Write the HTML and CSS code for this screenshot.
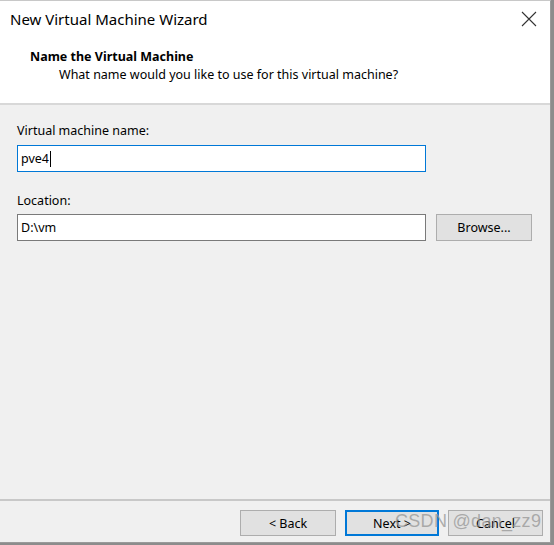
FILE: index.html
```html
<!DOCTYPE html>
<html>
<head>
<meta charset="utf-8">
<link rel="stylesheet" href="styles.css">
</head>
<body>
<div class="window">
  <div class="titlebar">
    <span class="title">New Virtual Machine Wizard</span>
    <svg class="close" width="16" height="16" viewBox="0 0 16 16"><path d="M1 1 L15 15 M15 1 L1 15" stroke="#333" stroke-width="1.1" fill="none"/></svg>
  </div>
  <div class="header">
    <div class="h-title">Name the Virtual Machine</div>
    <div class="h-sub">What name would you like to use for this virtual machine?</div>
  </div>
  <div class="content">
    <div class="label">Virtual machine name:</div>
    <div class="field focused"><span>pve4</span><span class="caret"></span></div>
    <div class="label loc">Location:</div>
    <div class="row">
      <div class="field"><span>D:\vm</span></div>
      <div class="btn browse">Browse...</div>
    </div>
  </div>
  <div class="footer">
    <div class="btn back">&lt; Back</div>
    <div class="btn default">Next &gt;</div>
    <div class="btn">Cancel</div>
    <div class="watermark">CSDN @dan_zz9</div>
  </div>
</div>
</body>
</html>
```
FILE: styles.css
```css
html, body {
  margin: 0;
  padding: 0;
}
body {
  width: 554px;
  height: 545px;
  background: #8c8c8c;
  font-family: "Noto Sans", "Open Sans", sans-serif;
  font-size: 12px;
  color: #000;
  overflow: hidden;
}
.window {
  width: 550px;
  height: 541px;
  border-right: 1px solid #9a9a9a;
  border-bottom: 1px solid #9a9a9a;
  border-top: 1px solid #c8c8c8;
  background: #f0f0f0;
  display: flex;
  flex-direction: column;
  position: relative;
}
.titlebar {
  background: #fff;
  height: 37px;
  display: flex;
  align-items: center;
  justify-content: space-between;
  padding: 0 13px 0 10px;
}
.title {
  font-size: 15px;
  color: #000;
  margin-top: -2px;
}
.close {
  margin-top: -1px;
}
.header {
  background: #fff;
  height: 67px;
  border-bottom: 2px solid #d8d8d8;
  padding: 10px 0 0 30px;
  box-sizing: border-box;
}
.h-title {
  font-weight: bold;
  font-size: 12.5px;
  line-height: 18px;
}
.h-sub {
  padding-left: 29px;
  line-height: 18px;
  font-size: 12.5px;
}
.content {
  flex: 1;
  padding: 17px 0 0 17px;
}
.label {
  line-height: 18px;
  font-size: 12.5px;
}
.label.loc {
  margin-top: 20px;
}
.field {
  width: 409px;
  height: 27px;
  border: 1px solid #7a7a7a;
  background: #fff;
  box-sizing: border-box;
  display: flex;
  align-items: center;
  padding-left: 3px;
  font-size: 12.5px;
  margin-top: 5px;
}
.field.focused {
  border-color: #0078d7;
}
.caret {
  width: 1px;
  height: 16px;
  background: #000;
  margin-left: 1px;
}
.row {
  display: flex;
  gap: 10px;
  align-items: flex-start;
}
.row .field {
  margin-top: 4px;
}
.btn {
  width: 95px;
  height: 26px;
  box-sizing: border-box;
  border: 1px solid #adadad;
  background: #e1e1e1;
  display: flex;
  align-items: center;
  justify-content: center;
  font-size: 12.5px;
}
.btn.browse {
  margin-top: 4px;
  width: 96px;
  height: 27px;
}
.btn.back {
  width: 96px;
}
.btn.default {
  border: 2px solid #0078d7;
  width: 94px;
}
.footer {
  height: 43px;
  border-top: 2px solid #c8c8c8;
  display: flex;
  justify-content: flex-end;
  align-items: flex-start;
  gap: 9px;
  padding: 9px 7px 0 0;
  box-sizing: border-box;
  position: relative;
}
.footer .btn:last-of-type {
  margin-left: 1px;
}
.watermark {
  position: absolute;
  left: 395px;
  top: 10px;
  font-family: "Liberation Sans", sans-serif;
  font-size: 18px;
  color: rgba(150, 150, 150, 0.75);
  letter-spacing: 0.3px;
  pointer-events: none;
}
```
